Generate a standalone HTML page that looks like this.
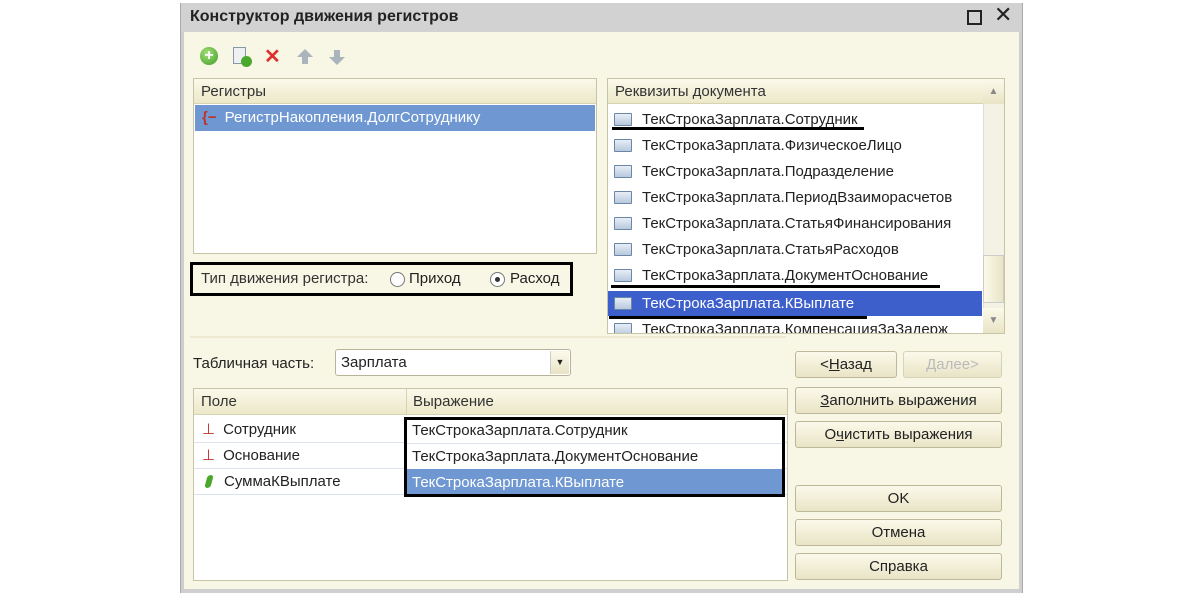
<!DOCTYPE html>
<html><head><meta charset="utf-8"><style>
*{margin:0;padding:0;box-sizing:border-box}
body{width:1200px;height:593px;background:#fff;position:relative;overflow:hidden;font-family:"Liberation Sans",sans-serif;font-size:15px;color:#222}
.a{position:absolute}
.win{left:180px;top:3px;width:843px;height:590px;background:#cfcfcf;border-left:1px solid #aaa;border-right:1px solid #aaa}
.body{left:184px;top:32px;width:835px;height:557px;background:#f8f6e4}
.panel{background:#fff;border:1px solid #c8c4a8}
.hdr{background:linear-gradient(#fbf9ea,#ece8c8);border-bottom:1px solid #d6d2b4;height:25px;line-height:25px;padding-left:7px;color:#333}
.btn{background:linear-gradient(#fbf9ea,#e9e4c6);border:1px solid #bdb89a;border-radius:3px;text-align:center;line-height:25px;color:#222}
.row{height:26px;line-height:26px;position:absolute;left:0;right:0;white-space:nowrap}
.ic{display:inline-block;width:18px;height:13px;border:1px solid #6a86a8;background:linear-gradient(#e8eef6,#b8c8dc);vertical-align:-2px;margin:0 10px 0 6px;border-radius:1px}
.ul{position:absolute;height:3px;background:#000}
</style></head><body>
<div class="a win"></div>
<div class="a" style="left:181px;top:3px;width:841px;height:29px;background:#d2d2d2"></div>
<div class="a" style="left:190px;top:8px;font-weight:bold;font-size:16px;color:#222">Конструктор движения регистров</div>
<div class="a" style="left:967px;top:10px;width:15px;height:15px;border:2px solid #222"></div>
<div class="a" style="left:994px;top:2px;font-size:22px;color:#222">✕</div>
<div class="a body"></div>
<!-- toolbar -->
<div class="a" style="left:200px;top:47px;width:18px;height:18px;border-radius:50%;background:radial-gradient(circle at 40% 35%,#a6e07a,#3e9a24);color:#fff;font-weight:bold;font-size:16px;line-height:18px;text-align:center">+</div>
<div class="a" style="left:233px;top:47px;width:13px;height:17px;background:#eef0f4;border:1px solid #8898a8"></div>
<div class="a" style="left:241px;top:56px;width:11px;height:11px;border-radius:50%;background:#4ba82e"></div>
<div class="a" style="left:264px;top:44px;color:#e0302a;font-size:20px;font-weight:bold">✕</div>
<svg class="a" style="left:296px;top:48px" width="18" height="18"><path d="M9 1 L17 9 L12 9 L12 16 L6 16 L6 9 L1 9Z" fill="#aab4bc"/></svg>
<svg class="a" style="left:328px;top:48px" width="18" height="18"><path d="M9 17 L17 9 L12 9 L12 2 L6 2 L6 9 L1 9Z" fill="#aab4bc"/></svg>
<!-- registers -->
<div class="a panel" style="left:193px;top:78px;width:404px;height:176px">
<div class="hdr">Регистры</div>
<div class="row" style="top:26px;background:#6f98d2;color:#fff;left:1px;right:1px"><span style="color:#c03028;margin:0 8px 0 7px;font-weight:bold">{−</span>РегистрНакопления.ДолгСотруднику</div>
</div>
<div class="a" style="left:190px;top:262px;width:383px;height:34px;border:3px solid #000"></div>
<div class="a" style="left:201px;top:270px;color:#333">Тип движения регистра:</div>
<div class="a" style="left:390px;top:272px;width:15px;height:15px;border:1px solid #777;border-radius:50%;background:#fff"></div>
<div class="a" style="left:409px;top:270px">Приход</div>
<div class="a" style="left:490px;top:272px;width:15px;height:15px;border:1px solid #777;border-radius:50%;background:#fff"><div style="margin:4px;width:5px;height:5px;border-radius:50%;background:#333"></div></div>
<div class="a" style="left:510px;top:270px">Расход</div>
<div class="a" style="left:190px;top:336px;width:596px;height:2px;background:#ece8d2"></div>
<!-- requisites -->
<div class="a panel" style="left:607px;top:78px;width:398px;height:256px;overflow:hidden">
<div class="hdr" style="margin-right:21px">Реквизиты документа</div>
<div class="a" style="right:0;top:0;width:21px;height:254px;background:#f4f2e4;border-left:1px solid #ddd"></div>
<div class="a" style="right:0;top:0;width:21px;height:25px;background:linear-gradient(#fbf9ea,#e9e4c6);color:#888;font-size:10px;text-align:center;line-height:25px">▲</div>
<div class="a" style="right:0;top:176px;width:21px;height:48px;background:linear-gradient(90deg,#fbf9ea,#e9e4c6);border:1px solid #ccc"></div>
<div class="a" style="right:0;bottom:0;width:21px;height:25px;background:linear-gradient(#fbf9ea,#e9e4c6);color:#888;font-size:10px;text-align:center;line-height:25px">▼</div>
<div style="position:absolute;left:0;right:22px;top:28px;bottom:0">
<div class="row" style="top:0"><span class="ic"></span>ТекСтрокаЗарплата.Сотрудник</div>
<div class="row" style="top:26px"><span class="ic"></span>ТекСтрокаЗарплата.ФизическоеЛицо</div>
<div class="row" style="top:52px"><span class="ic"></span>ТекСтрокаЗарплата.Подразделение</div>
<div class="row" style="top:78px"><span class="ic"></span>ТекСтрокаЗарплата.ПериодВзаиморасчетов</div>
<div class="row" style="top:104px"><span class="ic"></span>ТекСтрокаЗарплата.СтатьяФинансирования</div>
<div class="row" style="top:130px"><span class="ic"></span>ТекСтрокаЗарплата.СтатьяРасходов</div>
<div class="row" style="top:156px"><span class="ic"></span>ТекСтрокаЗарплата.ДокументОснование</div>
<div class="row" style="top:184px;height:25px;line-height:25px;background:#3d5fcc;color:#fff"><span class="ic"></span>ТекСтрокаЗарплата.КВыплате</div>
<div class="row" style="top:210px"><span class="ic"></span>ТекСтрокаЗарплата.КомпенсацияЗаЗадерж</div>
</div></div>
<div class="ul" style="left:612px;top:127px;width:252px"></div>
<div class="ul" style="left:611px;top:285px;width:329px"></div>
<div class="ul" style="left:609px;top:316px;width:258px"></div>
<!-- tabular -->
<div class="a" style="left:193px;top:355px">Табличная часть:</div>
<div class="a" style="left:335px;top:349px;width:236px;height:27px;background:#fff;border:1px solid #b8b49a;border-radius:3px;line-height:25px;padding-left:5px">Зарплата</div>
<div class="a" style="left:550px;top:351px;width:19px;height:23px;background:linear-gradient(#fbf9ea,#e9e4c6);border-left:1px solid #ccc;font-size:9px;text-align:center;line-height:23px">▼</div>
<div class="a panel" style="left:193px;top:388px;width:595px;height:193px;overflow:hidden">
<div class="hdr" style="height:26px;line-height:26px;position:relative">Поле<span style="position:absolute;left:212px;top:0;border-left:1px solid #d6d2b4;padding-left:6px;height:26px">Выражение</span></div>
<div class="row" style="top:28px;border-bottom:1px solid #dde4ee"><span style="color:#c03028;margin:0 8px 0 8px">⊥</span>Сотрудник</div>
<div class="row" style="top:54px;border-bottom:1px solid #dde4ee"><span style="color:#c03028;margin:0 8px 0 8px">⊥</span>Основание</div>
<div class="row" style="top:80px;border-bottom:1px solid #dde4ee"><span style="display:inline-block;width:6px;height:13px;background:#4aa82a;border-radius:3px;margin:0 12px 0 12px;vertical-align:-2px;transform:skewX(-15deg)"></span>СуммаКВыплате</div>
</div>
<div class="a" style="left:404px;top:417px;width:381px;height:80px;border:3px solid #000;background:#fff"></div>
<div class="a" style="left:407px;top:443px;width:375px;height:1px;background:#dde4ee"></div>
<div class="a" style="left:407px;top:469px;width:375px;height:25px;background:#6f98d2"></div>
<div class="a" style="left:412px;top:422px">ТекСтрокаЗарплата.Сотрудник</div>
<div class="a" style="left:412px;top:448px">ТекСтрокаЗарплата.ДокументОснование</div>
<div class="a" style="left:412px;top:474px;color:#fff">ТекСтрокаЗарплата.КВыплате</div>
<!-- buttons -->
<div class="a btn" style="left:795px;top:351px;width:102px;height:27px">&lt;<u>Н</u>азад</div>
<div class="a btn" style="left:903px;top:351px;width:99px;height:27px;color:#bbb;border-color:#d6d2bc">Далее&gt;</div>
<div class="a btn" style="left:795px;top:387px;width:207px;height:27px"><u>З</u>аполнить выражения</div>
<div class="a btn" style="left:795px;top:421px;width:207px;height:27px">О<u>ч</u>истить выражения</div>
<div class="a btn" style="left:795px;top:485px;width:207px;height:27px">OK</div>
<div class="a btn" style="left:795px;top:519px;width:207px;height:27px">Отмена</div>
<div class="a btn" style="left:795px;top:553px;width:207px;height:27px">Справка</div>
</body></html>
